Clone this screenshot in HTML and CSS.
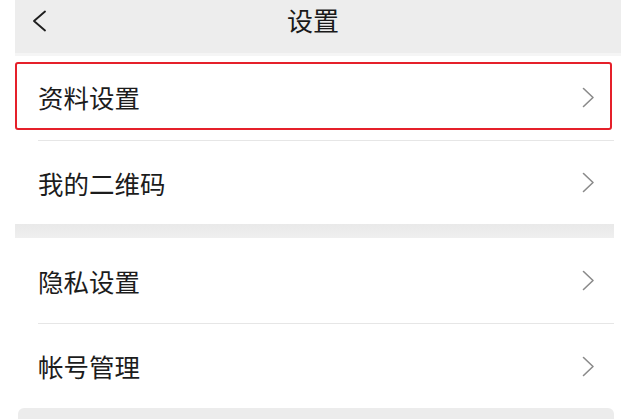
FILE: index.html
```html
<!DOCTYPE html>
<html lang="zh-CN">
<head>
<meta charset="utf-8">
<title>设置</title>
<link rel="stylesheet" href="styles.css">
</head>
<body>
<div class="screen">
  <header class="nav">
    <div class="nav-back">
      <svg width="17" height="22" viewBox="0 0 17 22"><path d="M14 1.5 L3 11 L14 20.5" fill="none" stroke="#1e1e1e" stroke-width="1.9" stroke-linecap="round" stroke-linejoin="round"/></svg>
    </div>
    <div class="nav-title">设置</div>
    <div></div>
  </header>

  <div class="list">
    <div class="row-wrap">
      <div class="row row-highlight">
        <span class="row-label">资料设置</span>
        <svg class="chev" width="13" height="21" viewBox="0 0 13 21"><path d="M1.5 1.5 L11 10.5 L1.5 19.5" fill="none" stroke="#8a8a8a" stroke-width="1.6" stroke-linecap="round" stroke-linejoin="round"/></svg>
      </div>
    </div>
    <div class="divider"></div>
    <div class="row row-short">
      <span class="row-label">我的二维码</span>
      <svg class="chev" width="13" height="21" viewBox="0 0 13 21"><path d="M1.5 1.5 L11 10.5 L1.5 19.5" fill="none" stroke="#8a8a8a" stroke-width="1.6" stroke-linecap="round" stroke-linejoin="round"/></svg>
    </div>
  </div>

  <div class="gap"></div>

  <div class="list">
    <div class="row row-tall">
      <span class="row-label">隐私设置</span>
      <svg class="chev" width="13" height="21" viewBox="0 0 13 21"><path d="M1.5 1.5 L11 10.5 L1.5 19.5" fill="none" stroke="#8a8a8a" stroke-width="1.6" stroke-linecap="round" stroke-linejoin="round"/></svg>
    </div>
    <div class="divider"></div>
    <div class="row">
      <span class="row-label">帐号管理</span>
      <svg class="chev" width="13" height="21" viewBox="0 0 13 21"><path d="M1.5 1.5 L11 10.5 L1.5 19.5" fill="none" stroke="#8a8a8a" stroke-width="1.6" stroke-linecap="round" stroke-linejoin="round"/></svg>
    </div>
  </div>

  <div class="bottom"></div>
</div>
</body>
</html>
```

FILE: styles.css
```css
* { box-sizing: border-box; }

html, body {
  margin: 0;
  padding: 0;
  background: #ffffff;
}

body {
  font-family: "Noto Sans CJK SC", "Noto Sans", sans-serif;
  color: #1c1c1c;
  width: 621px;
  height: 419px;
  overflow: hidden;
}

.screen {
  margin-left: 15px;
}

.nav {
  height: 56px;
  background: #ededed;
  border-bottom: 3px solid #f5f5f5;
  display: grid;
  grid-template-columns: 1fr auto 1fr;
  align-items: center;
  padding-right: 10px;
}

.nav-back {
  padding-left: 16px;
  padding-bottom: 12px;
  display: flex;
  align-items: center;
}

.nav-title {
  font-size: 26px;
  line-height: 1;
  padding-bottom: 14px;
  color: #1a1a1a;
}

.list {
  margin-right: 7px;
  background: #ffffff;
}

.row-wrap {
  height: 84px;
  padding: 6px 2px 10px 0;
}

.row {
  height: 84px;
  display: flex;
  align-items: center;
  justify-content: space-between;
  padding-left: 23px;
  padding-right: 19px;
}

.row-short { height: 83px; }
.row-tall { height: 85px; }

.row-highlight {
  height: 68px;
  border: 2px solid #e5202a;
  border-radius: 3px;
  padding-left: 21px;
  padding-right: 15px;
  padding-top: 2px;
}

.row-label {
  font-size: 25.5px;
  line-height: 1;
  color: #1c1c1c;
}

.chev { display: block; }

.divider {
  height: 1px;
  margin-left: 23px;
  background: #e6e6e6;
}

.gap {
  height: 14px;
  margin-right: 7px;
  background: linear-gradient(#e9e9e9, #efefef);
}

.bottom {
  height: 11px;
  margin-right: 7px;
  margin-left: 3px;
  background: #ececec;
  border-radius: 6px 6px 0 0;
}
```
